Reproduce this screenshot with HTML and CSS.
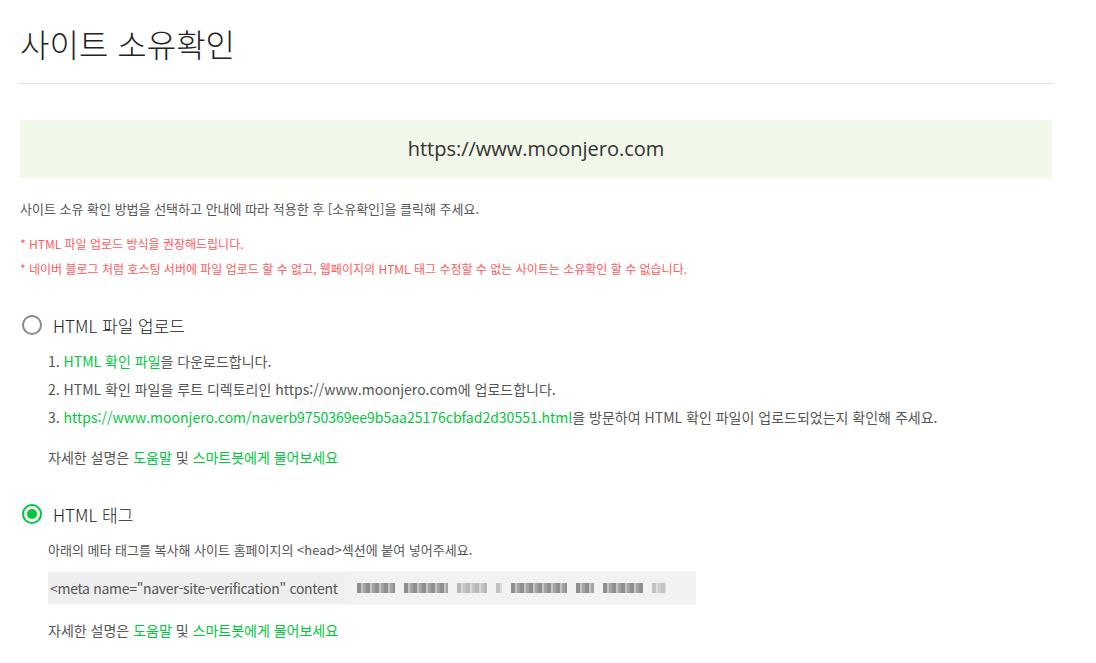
FILE: index.html
```html
<!DOCTYPE html>
<html lang="ko">
<head>
  <meta charset="UTF-8">
  <title>사이트 소유확인</title>
  <link rel="stylesheet" href="styles.css">
</head>
<body>

<div class="page">
  <h1 class="title">사이트 소유확인</h1>

  <div class="site-box">https://www.moonjero.com</div>

  <p class="desc">사이트 소유 확인 방법을 선택하고 안내에 따라 적용한 후 [소유확인]을 클릭해 주세요.</p>
  <p class="notice">* HTML 파일 업로드 방식을 권장해드립니다.</p>
  <p class="notice">* 네이버 블로그 처럼 호스팅 서버에 파일 업로드 할 수 없고, 웹페이지의 HTML 태그 수정할 수 없는 사이트는 소유확인 할 수 없습니다.</p>

  <div class="method">
    <label class="method-head">
      <span class="radio"></span>
      <span class="method-name">HTML 파일 업로드</span>
    </label>
    <div class="method-body">
      <ol class="steps">
        <li>1. <a href="#" class="link">HTML 확인 파일</a>을 다운로드합니다.</li>
        <li>2. HTML 확인 파일을 루트 디렉토리인 https://www.moonjero.com에 업로드합니다.</li>
        <li>3. <a href="#" class="link">https://www.moonjero.com/naverb9750369ee9b5aa25176cbfad2d30551.html</a>을 방문하여 HTML 확인 파일이 업로드되었는지 확인해 주세요.</li>
      </ol>
      <p class="help">자세한 설명은 <a href="#" class="link">도움말</a> 및 <a href="#" class="link">스마트봇에게 물어보세요</a></p>
    </div>
  </div>

  <div class="method">
    <label class="method-head">
      <span class="radio checked"></span>
      <span class="method-name">HTML 태그</span>
    </label>
    <div class="method-body">
      <p class="tag-desc">아래의 메타 태그를 복사해 사이트 홈페이지의 &lt;head&gt;섹션에 붙여 넣어주세요.</p>
      <div class="meta-box">
        <span class="meta-code">&lt;meta name="naver-site-verification" content</span>
        <span class="blur">
          <i class="b1"></i><i class="b2"></i><i class="b3"></i><i class="b4"></i><i class="b5"></i><i class="b6"></i><i class="b7"></i><i class="b8"></i>
        </span>
      </div>
      <p class="help last">자세한 설명은 <a href="#" class="link">도움말</a> 및 <a href="#" class="link">스마트봇에게 물어보세요</a></p>
    </div>
  </div>
</div>

</body>
</html>
```

FILE: styles.css
```css
body {
    margin: 0;
    background-color: #fff;
    font-family: "Noto Sans CJK KR", "Noto Sans", sans-serif;
    color: #555;
}
.page {
    width: 1032px;
    padding: 0 20px;
}
.title {
    margin: 0;
    padding: 20px 0 17px;
    font-size: 32px;
    font-weight: 300;
    line-height: 46px;
    color: #222;
    border-bottom: 1px solid #ddd;
}
.site-box {
    margin-top: 36px;
    height: 58px;
    line-height: 58px;
    background-color: #f1f7e9;
    text-align: center;
    font-family: "Open Sans", "Noto Sans", sans-serif;
    font-size: 20px;
    color: #333;
}
.desc {
    margin: 19px 0 10px;
    font-size: 13px;
    line-height: 24px;
    color: #555;
}
.notice {
    margin: 0;
    font-size: 12px;
    line-height: 25px;
    color: #ff5a5a;
}
.method {
    margin-top: 32px;
}
.method + .method {
    margin-top: 31px;
}
.method-head {
    display: flex;
    align-items: center;
    gap: 11px;
    padding-left: 2px;
    height: 24px;
}
.radio {
    width: 20px;
    height: 20px;
    box-sizing: border-box;
    border: 2px solid #888;
    border-radius: 50%;
    display: flex;
    align-items: center;
    justify-content: center;
}
.radio.checked {
    border-color: #00c73c;
}
.radio.checked::after {
    content: "";
    width: 10px;
    height: 10px;
    border-radius: 50%;
    background-color: #00c73c;
}
.method-name {
    font-size: 17px;
    font-weight: 300;
    color: #222;
}
.method-body {
    padding-left: 28px;
}
.steps {
    list-style: none;
    margin: 10px 0 0;
    padding: 0;
    font-size: 14px;
    line-height: 28px;
}
.link {
    color: #00c73c;
    text-decoration: none;
}
.help {
    margin: 12px 0 0;
    font-size: 14px;
    line-height: 28px;
}
.help.last {
    margin-top: 12px;
}
.tag-desc {
    margin: 13px 0 11px;
    font-size: 13px;
    line-height: 22px;
}
.meta-box {
    display: flex;
    align-items: center;
    width: 648px;
    height: 32px;
    background-color: #eee;
    font-size: 14px;
    color: #555;
}
.meta-code {
    padding-left: 2px;
    white-space: nowrap;
    overflow: hidden;
    width: 293px;
    letter-spacing: -0.3px;
}
.blur {
    flex: 1;
    align-self: stretch;
    margin: -1px 0 -1px 2px;
    background-color: #f2f2f2;
    display: flex;
    align-items: center;
    gap: 9px;
    padding-left: 12px;
}
.blur i {
    display: block;
    height: 10px;
    background: repeating-linear-gradient(90deg, #7d7d7d 0 4px, #bdbdbd 4px 6px, #959595 6px 9px);
    opacity: 0.85;
}
.blur .b1 { width: 38px; }
.blur .b2 { width: 44px; }
.blur .b3 { width: 30px; opacity: 0.5; }
.blur .b4 { width: 6px; opacity: 0.4; }
.blur .b5 { width: 56px; }
.blur .b6 { width: 18px; }
.blur .b7 { width: 40px; }
.blur .b8 { width: 14px; opacity: 0.4; }
```
